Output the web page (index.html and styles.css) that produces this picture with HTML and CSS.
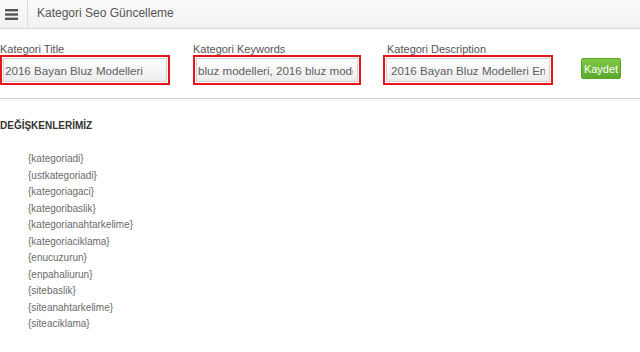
FILE: index.html
```html
<!DOCTYPE html>
<html>
<head>
<meta charset="utf-8">
<link rel="stylesheet" href="styles.css">
</head>
<body>
<header class="topbar">
  <div class="menu-btn">
    <svg width="13" height="11" viewBox="0 0 13 11"><rect x="0" y="0" width="13" height="2.4" fill="#555"/><rect x="0" y="4.3" width="13" height="2.4" fill="#555"/><rect x="0" y="8.6" width="13" height="2.4" fill="#555"/></svg>
  </div>
  <div class="title">Kategori Seo Güncelleme</div>
</header>
<section class="form-row">
  <div class="field f1">
    <label class="lbl">Kategori Title</label>
    <div class="hl"><input class="inp" type="text" value="2016 Bayan Bluz Modelleri"></div>
  </div>
  <div class="field f2">
    <label class="lbl">Kategori Keywords</label>
    <div class="hl"><input class="inp" type="text" value="bluz modelleri, 2016 bluz modelleri, bayan bluz"></div>
  </div>
  <div class="field f3">
    <label class="lbl lbl3">Kategori Description</label>
    <div class="hl"><input class="inp" type="text" value="2016 Bayan Bluz Modelleri En Uygun Fiyatlarla"></div>
  </div>
  <button class="save">Kaydet</button>
</section>
<div class="divider"></div>
<section class="vars">
  <h3 class="vars-title">DEĞİŞKENLERİMİZ</h3>
  <ul class="var-list">
    <li>{kategoriadi}</li>
    <li>{ustkategoriadi}</li>
    <li>{kategoriagaci}</li>
    <li>{kategoribaslik}</li>
    <li>{kategorianahtarkelime}</li>
    <li>{kategoriaciklama}</li>
    <li>{enucuzurun}</li>
    <li>{enpahaliurun}</li>
    <li>{sitebaslik}</li>
    <li>{siteanahtarkelime}</li>
    <li>{siteaciklama}</li>
  </ul>
</section>
</body>
</html>
```
FILE: styles.css
```css
* { box-sizing: border-box; }
body {
  margin: 0;
  background: #fff;
  font-family: "Liberation Sans", Arial, sans-serif;
  color: #555;
}
.topbar {
  display: flex;
  height: 29px;
  background: linear-gradient(#fafafa, #f2f2f2);
  border-bottom: 1px solid #d8d8d8;
}
.menu-btn {
  width: 28px;
  display: flex;
  align-items: center;
  padding-left: 5px;
  border-right: 1px solid #dcdcdc;
}
.title {
  padding-left: 9px;
  font-size: 12px;
  line-height: 27px;
  color: #555;
}
.form-row {
  display: flex;
  align-items: flex-start;
  padding-top: 14px;
  height: 69px;
}
.field { display: flex; flex-direction: column; }
.f1 { width: 170px; }
.f2 { width: 168px; margin-left: 23px; }
.f3 { width: 170px; margin-left: 22px; }
.lbl {
  font-size: 11px;
  line-height: 13px;
  color: #555;
  margin-bottom: -1px;
}
.lbl3 { margin-left: 4px; }
.hl {
  border: 2px solid #e8141b;
  padding: 1px;
  height: 30px;
}
.inp {
  display: block;
  width: 100%;
  height: 24px;
  border: 1px solid #d2d2d2;
  background: linear-gradient(#ffffff, #ececec);
  font-family: "Liberation Sans", Arial, sans-serif;
  font-size: 11.6px;
  color: #606060;
  padding: 0 4px 0 1px;
  outline: none;
}
.f3 .inp { padding-left: 4px; }
.save {
  margin-left: 28px;
  margin-top: 15px;
  width: 40px;
  height: 21px;
  padding: 0;
  border: 1px solid #58a52a;
  border-radius: 2px;
  background: linear-gradient(#80c844, #5aaa2c);
  color: #fff;
  font-family: "Liberation Sans", Arial, sans-serif;
  font-size: 11px;
}
.divider {
  height: 3px;
  border-top: 1px solid #cfcfcf;
  border-bottom: 1px solid #efefef;
}
.vars { padding-top: 19px; }
.vars-title {
  margin: 0;
  font-size: 10px;
  font-weight: bold;
  color: #333;
  line-height: 12px;
}
.var-list {
  list-style: none;
  margin: 19px 0 0 28px;
  padding: 0;
}
.var-list li {
  font-size: 10px;
  line-height: 16.5px;
  color: #6a6a6a;
}
```
